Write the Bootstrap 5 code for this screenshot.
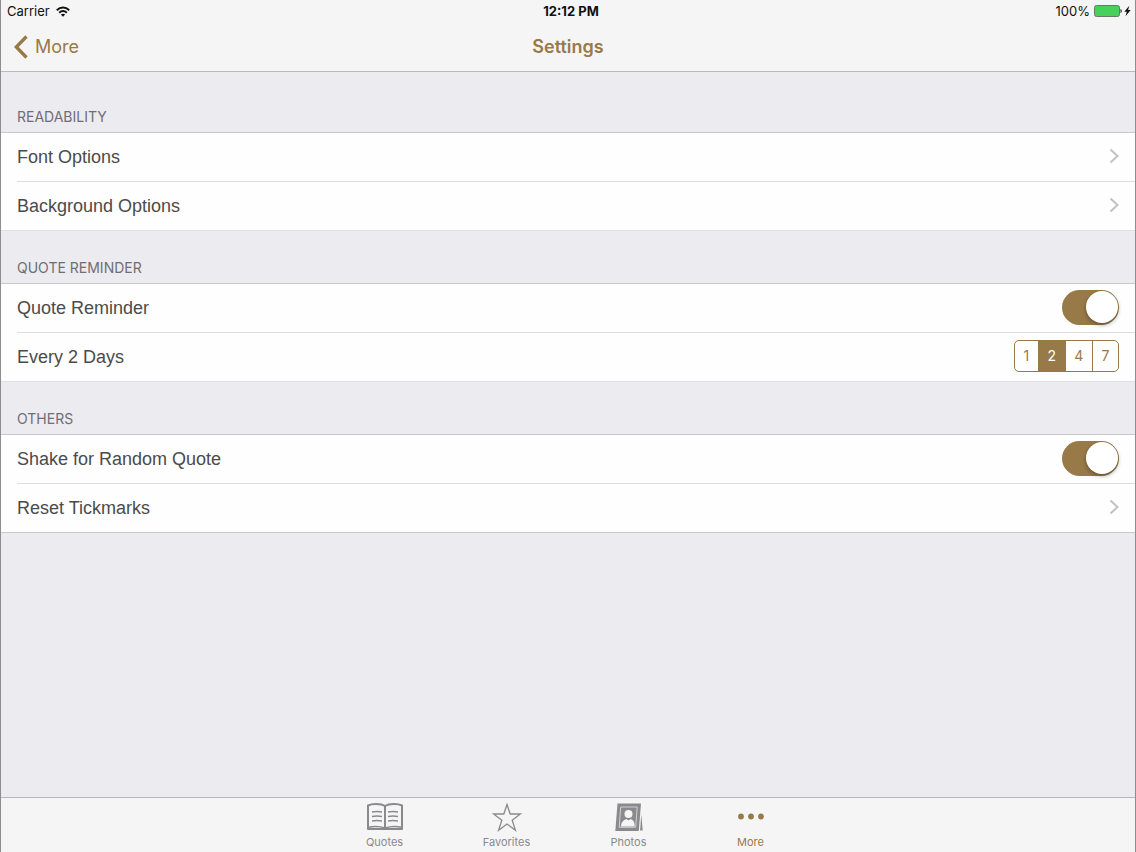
<!DOCTYPE html>
<html lang="en">
<head>
<meta charset="utf-8">
<meta name="viewport" content="width=device-width, initial-scale=1">
<title>Settings</title>
<link href="https://cdn.jsdelivr.net/npm/bootstrap@5.3.0/dist/css/bootstrap.min.css" rel="stylesheet">
<style>
  :root { --gold: #987a48; --hairline: #c9c7cc; --bar: #f6f5f6; }
  body { font-family: Inter, sans-serif; background: #ecebf0; color: #4b4b4b; }
  .app-frame { border: solid #8e8c90; border-width: 0 1px; }
  .top-bar { background: var(--bar); border-bottom: 1px solid #bab8bc; }
  .status-row { height: 22px; font-size: 13px; line-height: 22px; color: #111; padding: 0 4px 0 6px; }
  .carrier { gap: 6px; }
  .title-row { height: 49px; font-size: 18px; line-height: 49px; padding: 0 13px; }
  .title-row h1 { font-size: 18px; font-weight: 600; color: var(--gold); line-height: 49px; }
  .back-link { color: var(--gold); gap: 7px; }
  .group-title { font-size: 14px; line-height: 20px; font-weight: 400; color: #6f6e73; padding: 27px 16px 5px; }
  .group-title.first { padding-top: 35px; }
  .settings-list { background: #fefefe; border: solid var(--hairline); border-width: 1px 0; font-family: "Liberation Sans", Arial, sans-serif; font-size: 18px; }
  .settings-list.joined { border-bottom-color: #e0dfe4; }
  .setting { height: 48px; margin-left: 16px; padding-right: 16px; color: #4b4b4b; }
  .setting + .setting { border-top: 1px solid #dddce0; height: 49px; }
  .setting > svg, .switch-box, .day-picker { margin-bottom: 2px; }
  .setting-switch { width: 57px !important; height: 35px; margin: 0 !important; border: 0; border-radius: 18px; background: var(--gold) !important; padding: 0; }
  .switch-box { position: relative; line-height: 0; }
  .switch-box::after { content: ""; position: absolute; top: 1px; right: 1px; width: 32px; height: 32px; border-radius: 50%; background: #fff; box-shadow: 0 2px 4px #0005; pointer-events: none; }
  .switch-box:has(input:not(:checked)) .setting-switch { background: #ddd !important; }
  .switch-box:has(input:not(:checked))::after { right: 24px; }
  .day-picker { width: 105px; height: 32px; border: 1px solid var(--gold); border-radius: 5px; overflow: hidden; }
  .day-picker .btn { font-family: Inter, sans-serif; font-size: 14px; line-height: 30px; padding: 0; border: 0; border-radius: 0; color: var(--gold); }
  .day-picker .btn + .btn-check + .btn { border-left: 1px solid var(--gold); margin-left: 0; }
  .day-picker .btn-check:checked + .btn { background: var(--gold); color: #fff; }
  .tab-bar { background: var(--bar); border-top: 1px solid #b9b7bd; height: 55px; padding-right: 1px; }
  .tab-link { width: 122px; font-size: 11px; line-height: 14px; color: #8a898c; padding-top: 4px; gap: 3px; }
  .tab-link.active { color: var(--gold); }
</style>
</head>
<body>
<div class="app-frame d-flex flex-column min-vh-100">
  <header class="top-bar">
    <div class="status-row row g-0">
      <div class="carrier col d-flex align-items-center"><span>Carrier</span>
        <svg width="14" height="11" viewBox="0 0 14 11" fill="none" stroke="#111" stroke-width="2"><path d="M.8 4.3c3.7-3.6 8.700-3.600 12.400 0M3.200 6.800c2.300-2.100 5.300-2.100 7.600 0"/><path d="M7 10.800 4.800 8.600c1.300-1.100 3.100-1.100 4.400 0z" fill="#111" stroke="none"/></svg>
      </div>
      <div class="col-auto fw-bold ps-1">12:12 PM</div>
      <div class="col d-flex align-items-center justify-content-end"><span>100%</span>
        <svg class="ms-1" width="37" height="12" viewBox="0 0 37 12"><rect x=".5" y=".5" width="25" height="11" rx="2" fill="#45d15a" stroke="#6b776d"/><path d="M26.500 4v4c1.700-.4 1.700-3.600 0-4z" fill="#222"/><path d="M35.300 .8 30.300 6.700h2.500L31.500 11.200l5.200-6.200h-2.600z" fill="#111"/></svg>
      </div>
    </div>
    <div class="title-row row g-0">
      <div class="col"><a href="#" class="back-link d-inline-flex align-items-center text-decoration-none">
        <svg width="14" height="24" viewBox="0 0 14 24" fill="none" stroke="currentColor" stroke-width="3.300"><path d="M12.500 1.500 2.300 12l10.200 10.500"/></svg>More</a></div>
      <h1 class="col-auto m-0">Settings</h1>
      <div class="col"></div>
    </div>
  </header>

  <main class="flex-grow-1">
    <section>
      <h2 class="group-title first text-uppercase m-0">Readability</h2>
      <div class="settings-list joined">
        <a href="#" class="setting d-flex align-items-center justify-content-between text-decoration-none">Font Options
          <svg width="10" height="16" viewBox="0 0 10 16" fill="none" stroke="#c2c1c6" stroke-width="2"><path d="m1.500 1.500 7 6.500-7 6.500"/></svg></a>
        <a href="#" class="setting d-flex align-items-center justify-content-between text-decoration-none">Background Options
          <svg width="10" height="16" viewBox="0 0 10 16" fill="none" stroke="#c2c1c6" stroke-width="2"><path d="m1.500 1.500 7 6.500-7 6.500"/></svg></a>
      </div>
    </section>
    <section>
      <h2 class="group-title text-uppercase m-0">Quote Reminder</h2>
      <div class="settings-list joined">
        <div class="setting d-flex align-items-center justify-content-between">
          <label for="reminder">Quote Reminder</label>
          <div class="form-switch switch-box p-0"><input class="form-check-input setting-switch" type="checkbox" role="switch" id="reminder" checked></div>
        </div>
        <div class="setting d-flex align-items-center justify-content-between">
          <span id="interval">Every 2 Days</span>
          <div class="btn-group day-picker" role="group" aria-labelledby="interval">
            <input type="radio" class="btn-check" name="days" id="day1"><label class="btn" for="day1">1</label>
            <input type="radio" class="btn-check" name="days" id="day2" checked><label class="btn" for="day2">2</label>
            <input type="radio" class="btn-check" name="days" id="day4"><label class="btn" for="day4">4</label>
            <input type="radio" class="btn-check" name="days" id="day7"><label class="btn" for="day7">7</label>
          </div>
        </div>
      </div>
    </section>
    <section>
      <h2 class="group-title text-uppercase m-0">Others</h2>
      <div class="settings-list">
        <div class="setting d-flex align-items-center justify-content-between">
          <label for="shake">Shake for Random Quote</label>
          <div class="form-switch switch-box p-0"><input class="form-check-input setting-switch" type="checkbox" role="switch" id="shake" checked></div>
        </div>
        <a href="#" class="setting d-flex align-items-center justify-content-between text-decoration-none">Reset Tickmarks
          <svg width="10" height="16" viewBox="0 0 10 16" fill="none" stroke="#c2c1c6" stroke-width="2"><path d="m1.500 1.500 7 6.500-7 6.500"/></svg></a>
      </div>
    </section>
  </main>

  <nav class="tab-bar d-flex justify-content-center" aria-label="Sections">
    <a href="#" class="tab-link d-flex flex-column align-items-center text-decoration-none">
      <svg width="38" height="30" viewBox="0 0 38 30" fill="none" stroke="currentColor"><path stroke-width="2" stroke-linejoin="round" d="M19 4C15 1.300 6 1.300 2 3.500V27h34V3.500C32 1.300 23 1.300 19 4v23"/><path stroke-width="1.500" d="M2 25.300c5-1 12-1 17 .7 5-1.700 12-1.700 17-.7"/><path stroke-width="1.300" d="M6 10q5-1 10 0M6 14.500q5-1 10 0M6 19q5-1 10 0M22 10q5-1 10 0M22 14.500q5-1 10 0M22 19q5-1 10 0"/></svg>
      Quotes</a>
    <a href="#" class="tab-link d-flex flex-column align-items-center text-decoration-none">
      <svg width="30" height="30" viewBox="0 0 30 30" fill="none" stroke="currentColor" stroke-width="1.300"><path d="m15 2.500 3.200 9.500h10.200l-8.200 6.200 3.200 10-8.400-6.200-8.400 6.200 3.200-10L1.600 12h10.200z"/></svg>
      Favorites</a>
    <a href="#" class="tab-link d-flex flex-column align-items-center text-decoration-none">
      <svg width="30" height="30" viewBox="0 0 30 30"><path fill="currentColor" d="M3.500 1.500H27L24.800 29H1.300z"/><path fill="none" stroke="#d9d8da" stroke-width=".9" d="M6.700 5h16.500l-1.500 20.300H5.200z"/><path fill="currentColor" d="M27.300 12 28.700 28.500h-2.600z"/><circle cx="14.500" cy="12" r="4" fill="#f6f5f6"/><path fill="#f6f5f6" d="M7 24.500c.2-4.500 2.300-6.500 5.500-7.500l2 1.500 2-1.500c3 1 4.200 3 4.200 7.500z"/></svg>
      Photos</a>
    <a href="#" class="tab-link active d-flex flex-column align-items-center text-decoration-none" aria-current="page">
      <svg width="30" height="30" viewBox="0 0 30 30" fill="currentColor"><circle cx="5" cy="14.500" r="2.900"/><circle cx="15" cy="14.500" r="2.900"/><circle cx="25" cy="14.500" r="2.900"/></svg>
      More</a>
  </nav>
</div>
<script src="https://cdn.jsdelivr.net/npm/bootstrap@5.3.0/dist/js/bootstrap.bundle.min.js"></script>
</body>
</html>
